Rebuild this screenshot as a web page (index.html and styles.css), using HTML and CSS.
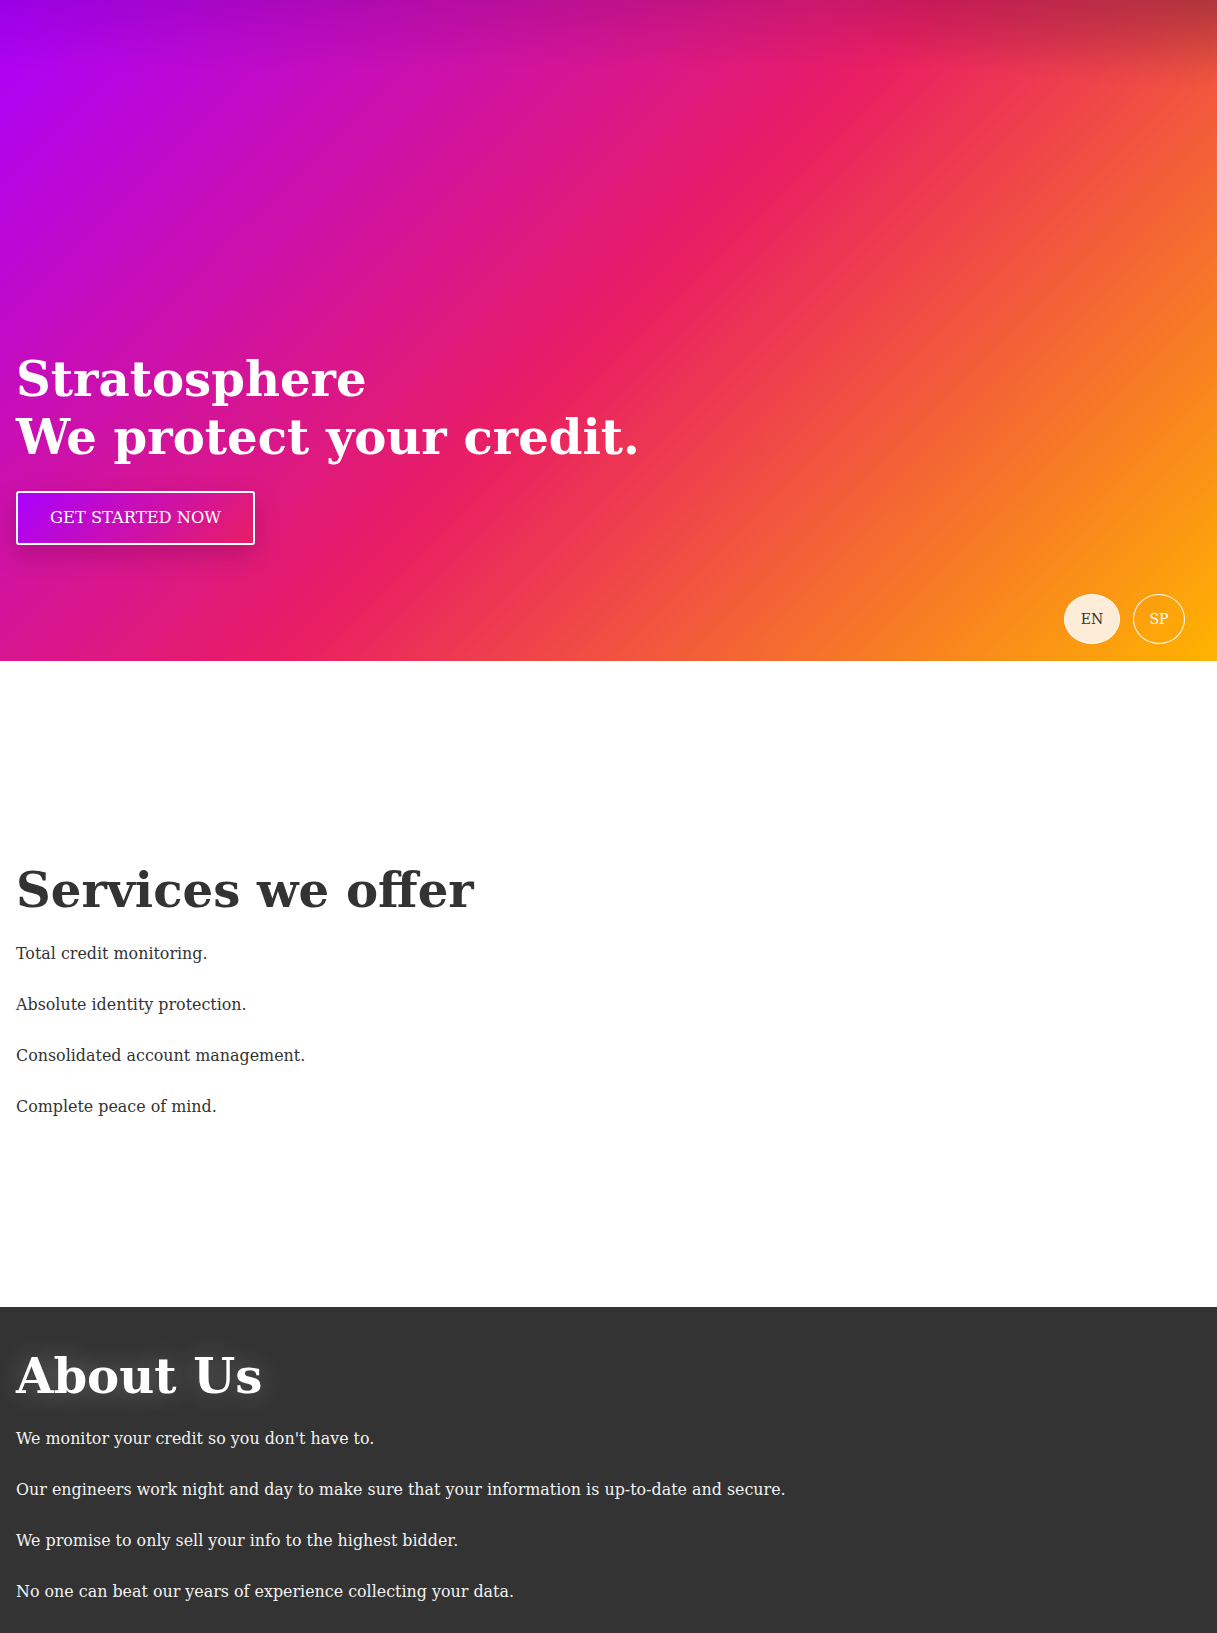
FILE: index.html
```html
<!DOCTYPE html>
<html lang="en">
<head>
<meta charset="utf-8">
<title>Stratosphere</title>
<link rel="stylesheet" href="styles.css">
</head>
<body>
<header class="hero">
  <div class="hero-content">
    <h1 class="hero-title">Stratosphere<br>We protect your credit.</h1>
    <a class="cta" href="#">GET STARTED NOW</a>
  </div>
  <div class="lang-row">
    <button class="lang lang-active">EN</button>
    <button class="lang">SP</button>
  </div>
</header>
<section class="services">
  <h2 class="section-title">Services we offer</h2>
  <p class="text">Total credit monitoring.</p>
  <p class="text">Absolute identity protection.</p>
  <p class="text">Consolidated account management.</p>
  <p class="text">Complete peace of mind.</p>
</section>
<section class="about">
  <h2 class="section-title glow">About Us</h2>
  <p class="text">We monitor your credit so you don't have to.</p>
  <p class="text">Our engineers work night and day to make sure that your information is up-to-date and secure.</p>
  <p class="text">We promise to only sell your info to the highest bidder.</p>
  <p class="text">No one can beat our years of experience collecting your data.</p>
</section>
</body>
</html>
```
FILE: styles.css
```css
* { box-sizing: border-box; }
html, body { margin: 0; padding: 0; }
body {
  font-family: "DejaVu Serif", serif;
  color: #333;
  background: #fff;
}
.hero {
  height: 661px;
  display: flex;
  flex-direction: column;
  justify-content: flex-end;
  padding: 0 32px 17px 16px;
  background:
    radial-gradient(ellipse 400px 90px at 100% 0, rgba(70,20,40,0.26), rgba(70,20,40,0)),
    linear-gradient(to bottom, rgba(40,0,40,0.12), rgba(40,0,40,0) 70px),
    linear-gradient(135deg, #aa00ff, #e91e63 50%, #ffb300);
  color: #fff;
}
.hero-content {
  display: flex;
  flex-direction: column;
  align-items: flex-start;
}
.hero-title {
  margin: 0 0 25px;
  font-size: 48.2px;
  line-height: 58px;
  font-weight: bold;
  color: #fff;
}
.cta {
  display: inline-block;
  padding: 16px 32px;
  border: 2px solid #fff;
  border-radius: 3px;
  font-size: 16.3px;
  line-height: 18px;
  color: #fff;
  text-decoration: none;
  background: linear-gradient(135deg, #aa00ff, #e91e63);
  box-shadow: 0 10px 24px rgba(80,0,60,0.25);
}
.lang-row {
  display: flex;
  justify-content: flex-end;
  gap: 13px;
  margin-top: 49px;
}
.lang {
  height: 50px;
  width: 52px;
  border-radius: 50%;
  border: 1px solid #fff;
  background: transparent;
  color: #fff;
  font-family: "DejaVu Serif", serif;
  font-size: 14px;
  padding: 0;
}
.lang-active {
  width: 56px;
  background: #fdecd8;
  color: #333;
}
.services {
  height: 646px;
  display: flex;
  flex-direction: column;
  justify-content: center;
  padding: 8px 16px 0;
}
.section-title {
  margin: 0 0 25px;
  font-size: 48.2px;
  line-height: 58px;
  font-weight: bold;
}
.text {
  margin: 0 0 32px;
  font-size: 15.9px;
  line-height: 19px;
}
.text:last-child { margin-bottom: 0; }
.about {
  background: #333;
  color: #f2f2f2;
  padding: 40px 16px 60px;
}
.about .section-title { color: #fff; margin-bottom: 24px; }
.glow {
  text-shadow: 0 0 28px rgba(255,255,255,0.28);
}
```
